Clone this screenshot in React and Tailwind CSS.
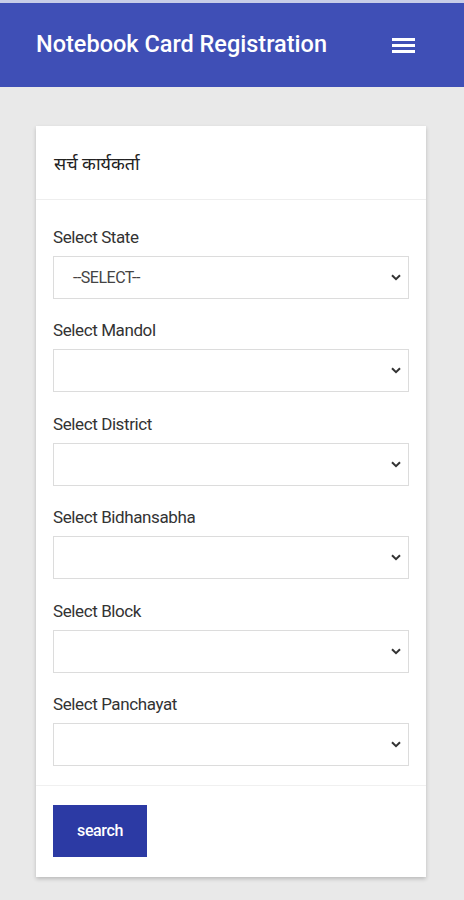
import React from 'react';

const fields = [
  { label: 'Select State', value: '--SELECT--' },
  { label: 'Select Mandol', value: '' },
  { label: 'Select District', value: '' },
  { label: 'Select Bidhansabha', value: '' },
  { label: 'Select Block', value: '' },
  { label: 'Select Panchayat', value: '' },
];

const Chevron = () => (
  <svg width="10" height="7" viewBox="0 0 10 7" className="text-[#333]">
    <path d="M1 1.2 L5 5.2 L9 1.2" fill="none" stroke="currentColor" strokeWidth="2" />
  </svg>
);

export default function App() {
  return (
    <div className="min-h-[900px] bg-[#e9e9e9] font-['Roboto','Noto_Sans','Noto_Sans_Devanagari',sans-serif]">
      {/* Header */}
      <header className="h-[87px] bg-[#3f4fb6] flex items-center justify-between pl-[36px] pr-[49px] border-t-[3px] border-[#c8cde8]">
        <span className="text-white text-[23.5px] font-medium tracking-[0px]">Notebook Card Registration</span>
        <div className="flex flex-col gap-[3px] w-[23px]">
          <span className="h-[3px] bg-white block" />
          <span className="h-[3px] bg-white block" />
          <span className="h-[3px] bg-white block" />
        </div>
      </header>

      {/* Card */}
      <div className="pt-[39px] pl-[36px] pr-[38px] pb-[22px]">
        <div className="bg-white shadow-[0_2px_4px_rgba(0,0,0,0.2)]">
          <div className="h-[74px] flex items-center px-[18px] border-b border-[#eeeeee]">
            <span className="text-[18px] text-[#222] pt-[2px]">सर्च कार्यकर्ता</span>
          </div>

          <div className="px-[17px] pt-[26px] pb-[19px] flex flex-col gap-[20.4px]">
            {fields.map((f) => (
              <div key={f.label} className="flex flex-col gap-[8px]">
                <label className="text-[17px] text-[#333] leading-[22px] tracking-[-0.4px]">{f.label}</label>
                <div className="h-[43px] border border-[#dcdcdc] flex items-center justify-between pl-[19px] pr-[7px]">
                  <span className="text-[16px] text-[#444] tracking-[-0.5px]">{f.value}</span>
                  <Chevron />
                </div>
              </div>
            ))}
          </div>

          <div className="border-t border-[#f0f0f0] px-[17px] pt-[19px] pb-[20px]">
            <button className="w-[94px] h-[52px] bg-[#2c3aa4] text-white text-[16px] font-medium tracking-[-0.4px]">
              search
            </button>
          </div>
        </div>
      </div>
    </div>
  );
}
